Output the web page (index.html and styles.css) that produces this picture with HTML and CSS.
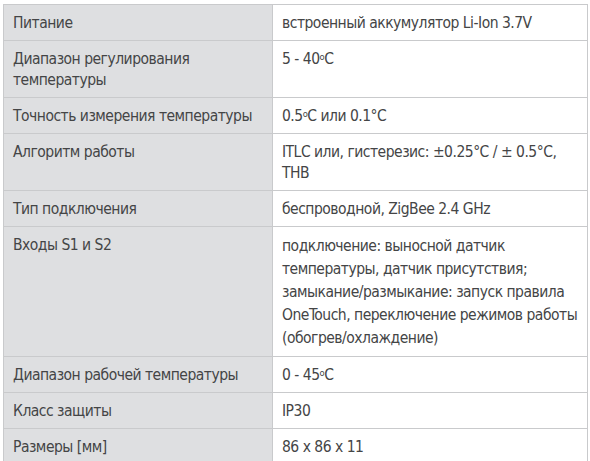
FILE: index.html
```html
<!DOCTYPE html>
<html lang="ru">
<head>
<meta charset="utf-8">
<link rel="stylesheet" href="styles.css">
</head>
<body>
<table class="spec">
  <tbody>
    <tr><td class="k">Питание</td><td class="v">встроенный аккумулятор Li-Ion 3.7V</td></tr>
    <tr><td class="k">Диапазон регулирования<br>температуры</td><td class="v">5 - 40<sup class="deg">o</sup>C</td></tr>
    <tr><td class="k">Точность измерения температуры</td><td class="v">0.5<sup class="deg">o</sup>C или 0.1°C</td></tr>
    <tr><td class="k">Алгоритм работы</td><td class="v">ITLC или, гистерезис: ±0.25°C / ± 0.5°C,<br>THB</td></tr>
    <tr><td class="k">Тип подключения</td><td class="v">беспроводной, ZigBee 2.4 GHz</td></tr>
    <tr><td class="k">Входы S1 и S2</td><td class="v loose">подключение: выносной датчик<br>температуры, датчик присутствия;<br>замыкание/размыкание: запуск правила<br>OneTouch, переключение режимов работы<br>(обогрев/охлаждение)</td></tr>
    <tr><td class="k">Диапазон рабочей температуры</td><td class="v">0 - 45<sup class="deg">o</sup>C</td></tr>
    <tr><td class="k">Класс защиты</td><td class="v">IP30</td></tr>
    <tr><td class="k">Размеры [мм]</td><td class="v">86 x 86 x 11</td></tr>
  </tbody>
</table>
</body>
</html>
```

FILE: styles.css
```css
html, body {
  margin: 0;
  padding: 0;
  background: #ffffff;
}

body {
  padding: 4px 3px 0 3px;
  font-family: "DejaVu Sans Condensed", "DejaVu Sans", sans-serif;
  font-stretch: condensed;
  font-size: 15.5px;
  letter-spacing: -0.5px;
  color: #444546;
}

.spec {
  width: 585px;
  border-collapse: collapse;
  border: 1px solid #c9cacc;
}

.spec td {
  border: 1px solid #c9cacc;
  vertical-align: top;
  line-height: 21px;
  padding: 8px 9px 6px 9px;
  text-align: left;
  white-space: nowrap;
}

.k {
  width: 250px;
  background: #dedfe1;
}

.v {
  background: #ffffff;
}

.v.loose {
  line-height: 23px;
}

.deg {
  font-size: 0.6em;
  vertical-align: 0.45em;
  line-height: 0;
}
```
